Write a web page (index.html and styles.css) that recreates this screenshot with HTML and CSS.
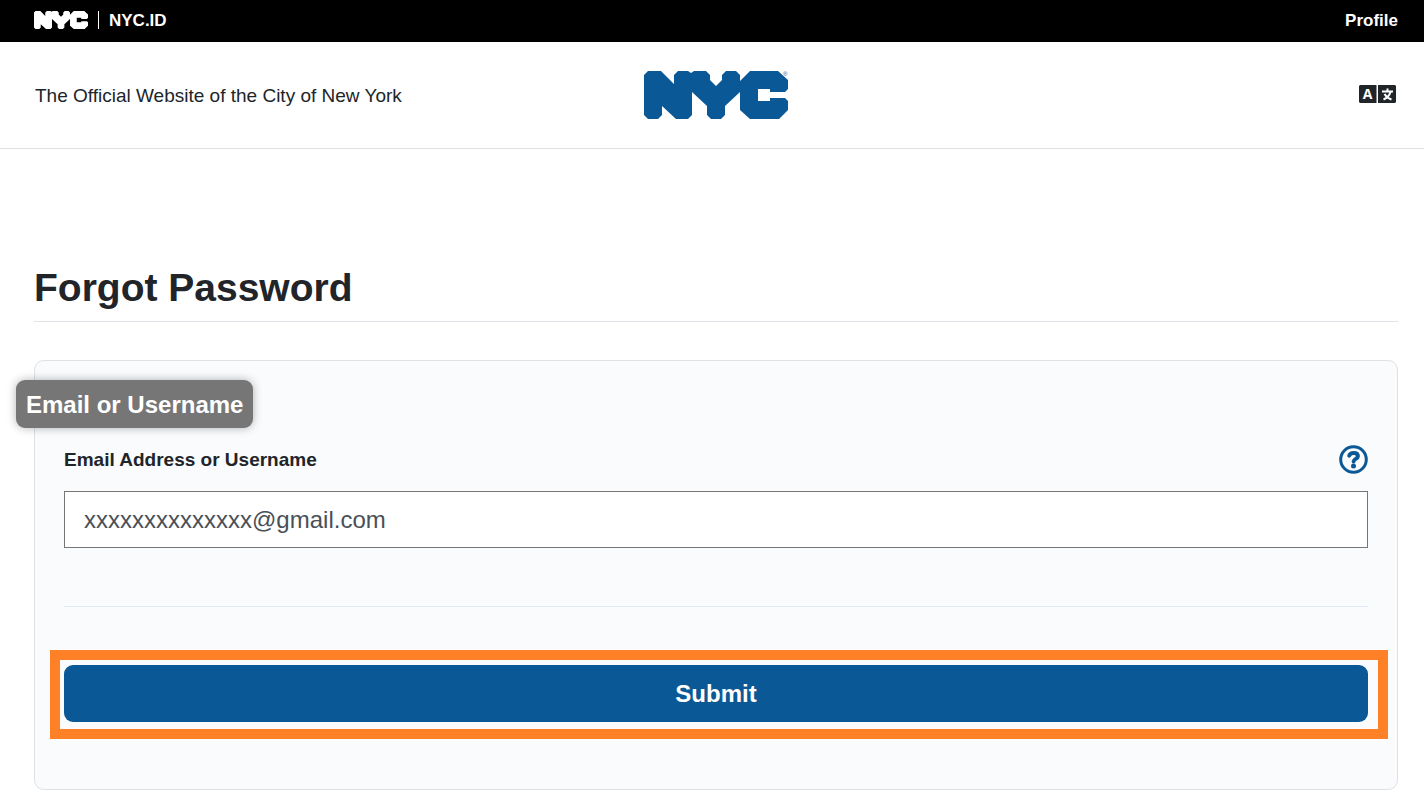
FILE: index.html
```
<!DOCTYPE html>
<html lang="en">
<head>
  <meta charset="UTF-8">
  <meta name="viewport" content="width=device-width, initial-scale=1.0">
  <title>Forgot Password | NYC.ID</title>
  <link rel="stylesheet" href="styles.css">
</head>
<body>
  <svg width="0" height="0" class="sprite" aria-hidden="true">
    <symbol id="nyc-logo" viewBox="0 0 144 48">
      <path d="M4 0H17L30 13V4L34 0H44L47 2L50 0H62L66 4V9L72 15L78 9V4L82 0H92L96 4V10L106 0H134L144 9V18L141 21H126V18H114V30H126V27H141L144 30V39L135 48H106L96 39V21L81 35V44L77 48H67L63 44V35L48 21V44L44 48H32L18 35V44L14 48H4L0 44V4Z"/>
    </symbol>
  </svg>

  <nav class="top-bar">
    <div class="top-bar-brand">
      <svg class="top-bar-logo" role="img" aria-label="NYC"><use href="#nyc-logo"/></svg>
      <span class="divider"></span>
      <a href="#" class="top-bar-link">NYC.ID</a>
    </div>
    <a href="#" class="top-bar-link">Profile</a>
  </nav>

  <header class="site-header">
    <div class="tagline">The Official Website of the City of New York</div>
    <a href="#" class="header-logo" aria-label="NYC">
      <svg width="144" height="48"><use href="#nyc-logo"/></svg>
      <span class="registered">®</span>
    </a>
    <button type="button" class="language-btn" aria-label="Select language">
      <svg width="37" height="18" viewBox="0 0 37 18">
        <path class="tile" d="M1 0H17.500V18H1L0 17V1ZM19 0H36L37 1V17L36 18H19Z"/>
        <text x="8.500" y="14" text-anchor="middle">A</text>
        <path class="glyph" d="M28.500 3.500V6M23 6.500H34M31.500 7C30.500 10.500 28 13 24.500 14.500M25.500 9C27 11.500 29 13.500 32.500 14.500"/>
      </svg>
    </button>
  </header>

  <main class="content">
    <h1>Forgot Password</h1>
    <form class="card">
      <div class="callout">Email or Username</div>
      <div class="label-row">
        <label for="username">Email Address or Username</label>
        <button type="button" class="help-btn" aria-label="Help">
          <svg width="29" height="29" viewBox="0 0 29 29">
            <circle class="ring" cx="14.500" cy="14.500" r="12.800"/>
            <path class="mark" d="M10.200 10.600C10.900 8.700 12.400 7.900 14.700 7.900C17.200 7.900 18.900 9.100 18.900 11.200C18.900 14 14.600 13.700 14.600 16.600"/>
            <circle class="dot" cx="14.500" cy="21" r="2.500"/>
          </svg>
        </button>
      </div>
      <input type="text" id="username" class="text-input" value="xxxxxxxxxxxxxx@gmail.com">
      <hr>
      <div class="highlight">
        <button type="submit" class="submit-btn">Submit</button>
      </div>
    </form>
  </main>
</body>
</html>
```
FILE: styles.css
```
* {
  margin: 0;
  padding: 0;
  box-sizing: border-box;
}

body {
  font-family: "Liberation Sans", Arial, sans-serif;
  color: #212529;
  background-color: #fff;
}

button {
  border: none;
  background: none;
  cursor: pointer;
}

.sprite {
  position: absolute;
}

.top-bar {
  display: flex;
  align-items: center;
  justify-content: space-between;
  height: 42px;
  padding: 0 26px 2px 34px;
  background-color: #000;
}

.top-bar-brand {
  display: flex;
  align-items: center;
}

.top-bar-logo {
  width: 54px;
  height: 18px;
  fill: #fff;
}

.top-bar-link {
  padding-top: 2px;
  color: #fff;
  font-size: 17px;
  font-weight: bold;
  line-height: 18px;
  text-decoration: none;
}

.divider {
  width: 1px;
  height: 18px;
  margin: 0 10px;
  background-color: #fff;
}

/* header */
.site-header {
  display: grid;
  grid-template-columns: 1fr auto 1fr;
  align-items: center;
  height: 107px;
  padding: 0 28px 0 35px;
  border-bottom: 1px solid #dee2e6;
}

.tagline {
  padding-top: 2px;
  font-size: 19px;
}

.header-logo {
  position: relative;
  display: block;
  height: 48px;
  fill: #0a5895;
}

.registered {
  position: absolute;
  top: 0;
  right: 0;
  color: #0a5895;
  font-size: 6px;
  line-height: 6px;
}

.language-btn {
  justify-self: end;
  height: 20px;
  padding-bottom: 2px;
}

.language-btn svg,
.help-btn svg {
  display: block;
}

.language-btn .tile {
  fill: #212529;
}

.language-btn text {
  fill: #fff;
  font-family: "Open Sans", sans-serif;
  font-size: 14px;
  font-weight: bold;
}

.language-btn .glyph {
  fill: none;
  stroke: #fff;
  stroke-width: 2;
}

/* main content */
.content {
  padding: 113px 26px 16px 34px;
}

h1 {
  padding-bottom: 7px;
  border-bottom: 1px solid #dee2e6;
  font-size: 39px;
  line-height: 52px;
}

.card {
  position: relative;
  margin-top: 38px;
  padding: 84px 29px 50px;
  background-color: #fafbfd;
  border: 1px solid #dee2e6;
  border-radius: 10px;
}

.callout {
  position: absolute;
  top: 19px;
  left: -19px;
  height: 48px;
  padding: 0 10px;
  border-radius: 9px;
  background-color: #767676;
  box-shadow: 0 0 10px rgba(0, 0, 0, 0.3);
  color: #fff;
  font-size: 24px;
  font-weight: bold;
  line-height: 50px;
}

.label-row {
  display: flex;
  align-items: center;
  justify-content: space-between;
}

.label-row label {
  font-size: 19px;
  font-weight: bold;
}

.help-btn .ring {
  fill: none;
  stroke: #0a5895;
  stroke-width: 3;
}

.help-btn .mark {
  fill: none;
  stroke: #0a5895;
  stroke-width: 4;
  stroke-linecap: round;
}

.help-btn .dot {
  fill: #0a5895;
}

.text-input {
  display: block;
  width: 100%;
  height: 57px;
  margin-top: 17px;
  padding: 0 19px;
  border: 1px solid #767676;
  background-color: #fff;
  color: #495057;
  font-family: inherit;
  font-size: 24px;
}

hr {
  margin: 58px 0 43px;
  border: none;
  border-top: 1px solid #dfe9f7;
}

.highlight {
  margin: 0 -20px 0 -14px;
  padding: 5px 10px 7px 4px;
  border: 10px solid #ff8127;
}

.submit-btn {
  display: block;
  width: 100%;
  height: 57px;
  border-radius: 9px;
  background-color: #0a5895;
  color: #fff;
  font-family: inherit;
  font-size: 24px;
  font-weight: bold;
}
```
